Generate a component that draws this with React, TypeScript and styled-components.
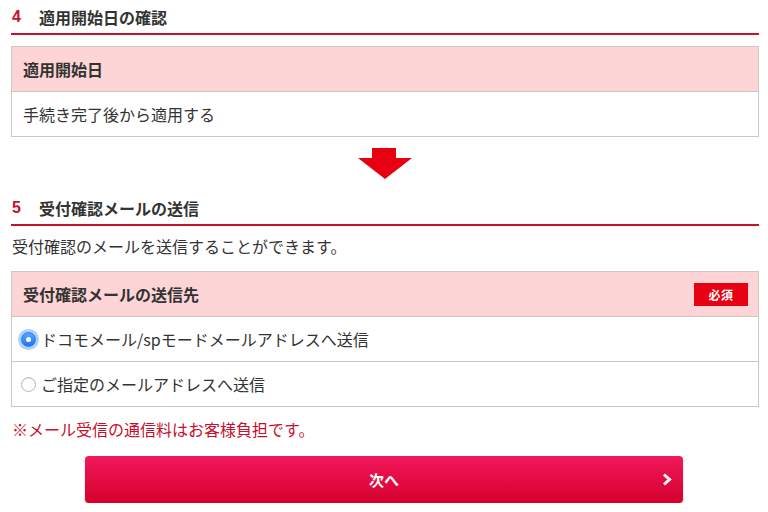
import React from "react";
import styled, { createGlobalStyle } from "styled-components";

const Global = createGlobalStyle`
  html, body { margin: 0; padding: 0; background: #fff; }
  body {
    font-family: "Noto Sans CJK JP", "Noto Sans", sans-serif;
    color: #333;
    -webkit-font-smoothing: antialiased;
  }
`;

const Page = styled.div`
  width: 748px;
  padding: 0 9px 0 11px;
  display: flex;
  flex-direction: column;
`;

const Heading = styled.h2`
  margin: 0;
  height: 33px;
  display: flex;
  align-items: center;
  border-bottom: 2px solid #c8102e;
  font-size: 16px;
  font-weight: 700;
  color: #333;
  line-height: 24px;
`;

const Num = styled.span`
  color: #c8102e;
  width: 27px;
  padding-left: 1px;
  font-family: "Liberation Sans", Arial, sans-serif;
  font-size: 16px;
  font-weight: 700;
`;

const Table = styled.div<{ $mt: number }>`
  margin-top: ${(p) => p.$mt}px;
  border: 1px solid #c9c9c9;
  display: flex;
  flex-direction: column;
`;

const HeadRow = styled.div`
  height: 44px;
  background: #fdd5d6;
  display: flex;
  align-items: center;
  justify-content: space-between;
  padding: 0 10px 0 11px;
  font-size: 16px;
  font-weight: 700;
  border-bottom: 1px solid #c9c9c9;
`;

const Row = styled.div<{ $last?: boolean }>`
  height: 44px;
  display: flex;
  align-items: center;
  padding: 0 11px;
  font-size: 16px;
  border-bottom: ${(p) => (p.$last ? "none" : "1px solid #c9c9c9")};
`;

const RadioRow = styled(Row)`
  padding-left: 9px;
  gap: 5px;
`;

const Radio = styled.span<{ $on?: boolean }>`
  width: 15px;
  height: 15px;
  border-radius: 50%;
  box-sizing: border-box;
  display: inline-flex;
  align-items: center;
  justify-content: center;
  flex: none;
  background: ${(p) =>
    p.$on ? "linear-gradient(#5aa6ff, #1f77f0)" : "#fff"};
  border: 1px solid ${(p) => (p.$on ? "#1f6fe0" : "#b5b5b5")};
  box-shadow: ${(p) =>
    p.$on ? "0 0 0 3px rgba(90, 160, 250, 0.5)" : "inset 0 1px 1px rgba(0,0,0,0.08)"};
  &::after {
    content: "";
    display: ${(p) => (p.$on ? "block" : "none")};
    width: 5px;
    height: 5px;
    border-radius: 50%;
    background: #fff;
  }
`;

const Badge = styled.span`
  width: 54px;
  height: 23px;
  background: #e60012;
  color: #fff;
  font-size: 12px;
  font-weight: 700;
  display: inline-flex;
  align-items: center;
  justify-content: center;
  letter-spacing: 0.5px;
`;

const ArrowWrap = styled.div`
  margin-top: 11px;
  margin-bottom: 12px;
  display: flex;
  justify-content: center;
  height: 31px;
`;

const Text = styled.p<{ $red?: boolean; $mt: number }>`
  margin: ${(p) => p.$mt}px 0 0 1px;
  font-size: 16px;
  line-height: 24px;
  color: ${(p) => (p.$red ? "#c8102e" : "#333")};
`;

const ButtonRow = styled.div`
  margin-top: 15px;
  display: flex;
  justify-content: center;
  padding-right: 2px;
`;

const NextButton = styled.button`
  position: relative;
  width: 598px;
  height: 47px;
  border: none;
  border-radius: 4px;
  background: linear-gradient(#f2185c, #d4002c);
  box-shadow: 0 2px 2px rgba(200, 0, 40, 0.25);
  color: #fff;
  font-family: "Noto Sans CJK JP", sans-serif;
  font-size: 15px;
  font-weight: 700;
  display: flex;
  align-items: center;
  justify-content: center;
  cursor: pointer;
`;

const Chevron = styled.svg`
  position: absolute;
  right: 11px;
  top: 17px;
`;

export default function App() {
  return (
    <>
      <Global />
      <Page>
        <Heading>
          <Num>4</Num>適用開始日の確認
        </Heading>
        <Table $mt={11}>
          <HeadRow>適用開始日</HeadRow>
          <Row $last>手続き完了後から適用する</Row>
        </Table>
        <ArrowWrap>
          <svg width="56" height="31" viewBox="0 0 56 31">
            <polygon
              points="15,0 39,0 39,10 55,10 28,31 1,10 15,10"
              fill="#e60012"
            />
          </svg>
        </ArrowWrap>
        <Heading>
          <Num>5</Num>受付確認メールの送信
        </Heading>
        <Text $mt={8}>受付確認のメールを送信することができます。</Text>
        <Table $mt={13}>
          <HeadRow>
            受付確認メールの送信先
            <Badge>必須</Badge>
          </HeadRow>
          <RadioRow>
            <Radio $on />
            ドコモメール/spモードメールアドレスへ送信
          </RadioRow>
          <RadioRow $last>
            <Radio />
            ご指定のメールアドレスへ送信
          </RadioRow>
        </Table>
        <Text $red $mt={10}>※メール受信の通信料はお客様負担です。</Text>
        <ButtonRow>
          <NextButton>
            次へ
            <Chevron width="10" height="13" viewBox="0 0 10 13">
              <path
                d="M2 1.5 L7.5 6.5 L2 11.5"
                fill="none"
                stroke="#fff"
                strokeWidth="3"
              />
            </Chevron>
          </NextButton>
        </ButtonRow>
      </Page>
    </>
  );
}
